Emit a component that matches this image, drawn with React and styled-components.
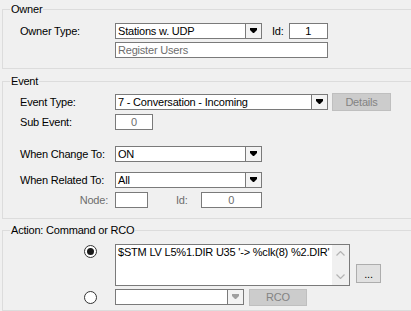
import React from 'react';
import styled, { createGlobalStyle } from 'styled-components';

const GlobalStyle = createGlobalStyle`
  body {
    margin: 0;
    background: #f0f0f0;
    font-family: "Liberation Sans", Arial, sans-serif;
    font-size: 11px;
    letter-spacing: -0.2px;
    color: #000;
    overflow: hidden;
  }
`;

const Page = styled.div`
  width: 409px;
  padding: 9px 0 0 2px;
  display: flex;
  flex-direction: column;
`;

// group box runs off the right side of the window, so no right edge is drawn
const Group = styled.div`
  position: relative;
  border: 1px solid #dcdcdc;
  border-right: none;
  padding: ${props => props.$pad};
  margin-top: ${props => props.$mt || 0}px;
  display: flex;
  flex-direction: column;
`;

const GroupTitle = styled.div`
  position: absolute;
  top: -7px;
  left: 7px;
  padding: 0 1px;
  line-height: 13px;
  background: #f0f0f0;
`;

const Row = styled.div`
  display: flex;
  align-items: ${props => props.$align || 'center'};
  height: ${props => props.$h || 16}px;
  margin-top: ${props => props.$mt || 0}px;
`;

const Label = styled.div`
  width: 95px;
  flex-shrink: 0;
  line-height: 13px;
  color: ${props => (props.$disabled ? '#6d6d6d' : '#000')};
  text-align: ${props => props.$right ? 'right' : 'left'};
  padding-right: ${props => props.$right ? 7 : 0}px;
  box-sizing: border-box;
`;

const InlineLabel = styled.div`
  line-height: 13px;
  color: ${props => (props.$disabled ? '#6d6d6d' : '#000')};
  margin: 0 ${props => props.$mr}px 0 ${props => props.$ml}px;
`;

const Combo = styled.div`
  box-sizing: border-box;
  width: ${props => props.$w}px;
  height: 16px;
  border: 1px solid #7a7a7a;
  background: #fff;
  display: flex;
  flex-shrink: 0;
`;

const ComboText = styled.div`
  flex: 1;
  padding-left: 2px;
  line-height: 14px;
  white-space: nowrap;
  overflow: hidden;
`;

const DropButton = styled.div`
  width: 15px;
  border-left: 1px solid #7a7a7a;
  background: #f3f3f3;
  display: flex;
  align-items: center;
  justify-content: center;
`;

const TextBox = styled.div`
  box-sizing: border-box;
  width: ${props => props.$w}px;
  height: 16px;
  border: 1px solid #7a7a7a;
  background: #fff;
  padding: 0 2px;
  line-height: 14px;
  text-align: ${props => props.$center ? 'center' : 'left'};
  color: ${props => (props.$gray ? '#6d6d6d' : '#000')};
  flex-shrink: 0;
`;

const Button = styled.div`
  box-sizing: border-box;
  width: ${props => props.$w}px;
  height: ${props => props.$h}px;
  margin-left: ${props => props.$ml || 0}px;
  margin-bottom: ${props => props.$mb || 0}px;
  align-self: ${props => props.$self || 'auto'};
  border: 1px solid ${props => (props.$disabled ? '#bfbfbf' : '#adadad')};
  background: ${props => (props.$disabled ? '#cccccc' : '#e1e1e1')};
  color: ${props => (props.$disabled ? '#838383' : '#000')};
  display: flex;
  align-items: center;
  justify-content: center;
  flex-shrink: 0;
`;

const RadioCell = styled.div`
  width: 95px;
  flex-shrink: 0;
  display: flex;
  justify-content: flex-end;
  padding-right: 18px;
  padding-top: ${props => props.$pt || 0}px;
  box-sizing: border-box;
`;

const Radio = styled.div`
  box-sizing: border-box;
  width: 13px;
  height: 13px;
  border-radius: 50%;
  border: 1px solid #333;
  background: #fff;
  display: flex;
  align-items: center;
  justify-content: center;

  &::after {
    content: '';
    width: 7px;
    height: 7px;
    border-radius: 50%;
    background: ${props => (props.$checked ? '#1a1a1a' : 'transparent')};
  }
`;

const TextArea = styled.div`
  box-sizing: border-box;
  width: 235px;
  height: 42px;
  border: 1px solid #7a7a7a;
  background: #fff;
  display: flex;
  flex-shrink: 0;
`;

const AreaText = styled.div`
  flex: 1;
  padding: 1px 2px;
  line-height: 13px;
  white-space: nowrap;
  overflow: hidden;
`;

const ScrollBar = styled.div`
  width: 17px;
  background: #f0f0f0;
  display: flex;
  flex-direction: column;
  justify-content: space-between;
  align-items: center;
  padding: 6px 0;
`;

const Arrow = ({ color = '#000' }) => (
  <svg width="7" height="6" viewBox="0 0 7 6">
    <path d="M0 0h7v2l-3 3h-1l-3-3z" fill={color} />
  </svg>
);

const Chevron = ({ up }) => (
  <svg width="9" height="5" viewBox="0 0 9 5">
    <path d={up ? 'M0.5 4.5l4-4 4 4' : 'M0.5 0.5l4 4 4-4'} fill="none" stroke="#b4b4b4" strokeWidth="1.2" />
  </svg>
);

const Select = ({ w, value, disabled }) => (
  <Combo $w={w}>
    <ComboText>{value}</ComboText>
    <DropButton>
      <Arrow color={disabled ? '#a0a0a0' : '#000'} />
    </DropButton>
  </Combo>
);

export default function App() {
  return (
    <>
      <GlobalStyle />
      <Page>
        <Group $pad="13px 0 10px 17px">
          <GroupTitle>Owner</GroupTitle>
          <Row>
            <Label>Owner Type:</Label>
            <Select w={147} value="Stations w. UDP" />
            <InlineLabel $ml={10} $mr={5}>Id:</InlineLabel>
            <TextBox $w={39} $center>1</TextBox>
          </Row>
          <Row $mt={3}>
            <Label />
            <TextBox $w={213} $gray>Register Users</TextBox>
          </Row>
        </Group>

        <Group $pad="11px 0 10px 17px" $mt={12}>
          <GroupTitle>Event</GroupTitle>
          <Row $h={18}>
            <Label>Event Type:</Label>
            <Select w={213} value="7 - Conversation - Incoming" />
            <Button $w={59} $h={18} $ml={4} $disabled>Details</Button>
          </Row>
          <Row $mt={3}>
            <Label>Sub Event:</Label>
            <TextBox $w={38} $center $gray>0</TextBox>
          </Row>
          <Row $mt={16}>
            <Label>When Change To:</Label>
            <Select w={147} value="ON" />
          </Row>
          <Row $mt={10}>
            <Label>When Related To:</Label>
            <Select w={147} value="All" />
          </Row>
          <Row $mt={4}>
            <Label $right $disabled>Node:</Label>
            <TextBox $w={33} />
            <InlineLabel $ml={28} $mr={13} $disabled>Id:</InlineLabel>
            <TextBox $w={61} $center $gray>0</TextBox>
          </Row>
        </Group>

        <Group $pad="13px 0 5px 17px" $mt={11}>
          <GroupTitle>Action: Command or RCO</GroupTitle>
          <Row $h={42} $align="flex-start">
            <RadioCell $pt={1}>
              <Radio $checked />
            </RadioCell>
            <TextArea>
              <AreaText>$STM LV L5%1.DIR U35 '-&gt; %clk(8) %2.DIR'</AreaText>
              <ScrollBar>
                <Chevron up />
                <Chevron />
              </ScrollBar>
            </TextArea>
            <Button $w={25} $h={19} $ml={6} $mb={3} $self="flex-end">...</Button>
          </Row>
          <Row $mt={3}>
            <RadioCell>
              <Radio />
            </RadioCell>
            <Select w={129} value="" disabled />
            <Button $w={58} $h={17} $ml={5} $disabled>RCO</Button>
          </Row>
        </Group>
      </Page>
    </>
  );
}
